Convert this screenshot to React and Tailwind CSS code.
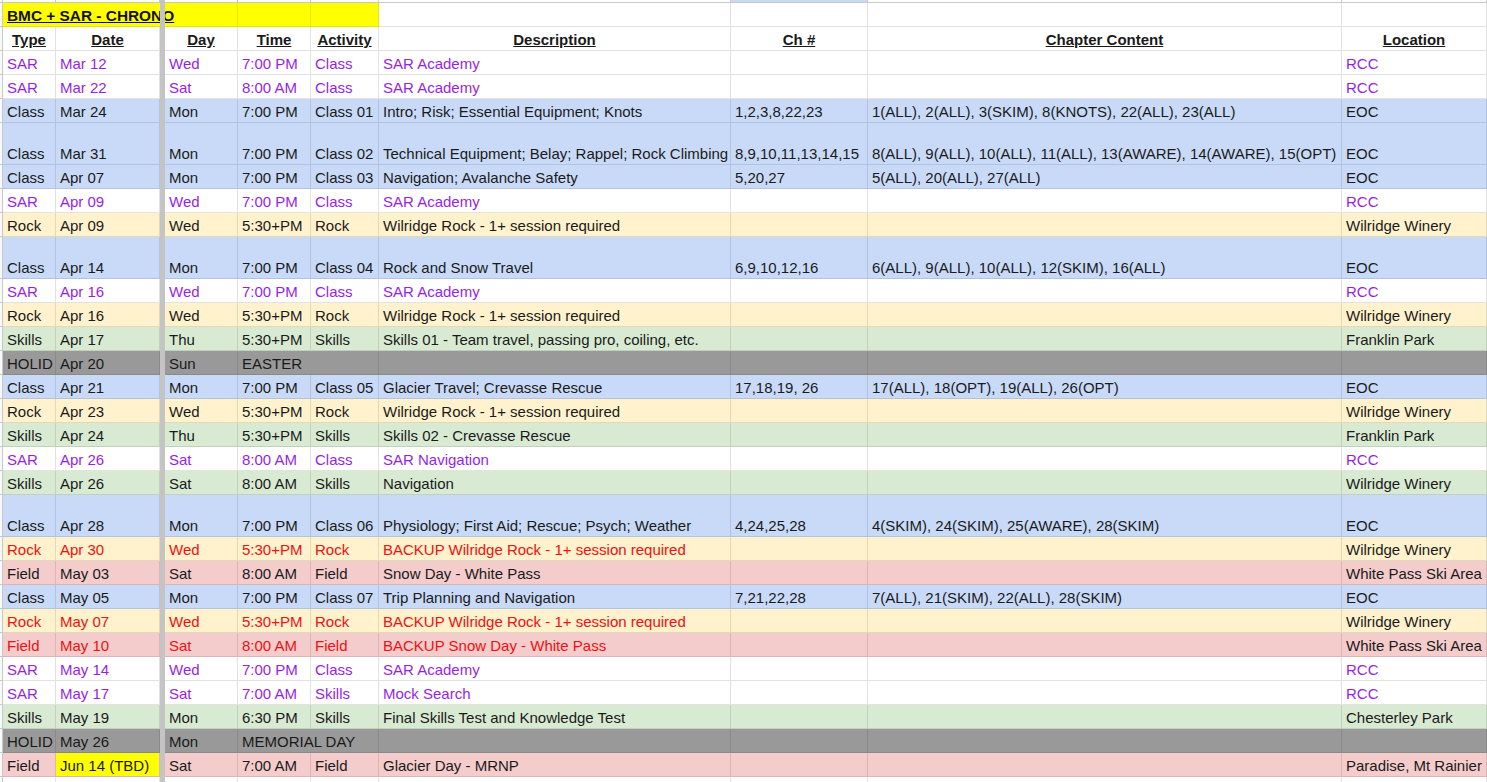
import React from "react";

const rowGrid =
  "grid grid-cols-[3px_53px_104px_5px_73px_73px_68px_352px_137px_474px_145px]";

const rowStyles = {
  sar: { bg: "bg-white", text: "text-[#961fe8]", loc: "text-[#961fe8]", line: "border-[#e2e2e2]" },
  cls: { bg: "bg-[#c9daf8]", text: "text-[#1a1a1a]", loc: "text-[#1a1a1a]", line: "border-[#b4c3dd]" },
  rock: { bg: "bg-[#fff2cc]", text: "text-[#1a1a1a]", loc: "text-[#1a1a1a]", line: "border-[#e2d8ba]" },
  rockLate: { bg: "bg-[#fff2cc]", text: "text-[#f01010]", loc: "text-[#1a1a1a]", line: "border-[#e2d8ba]" },
  skills: { bg: "bg-[#d9ead3]", text: "text-[#1a1a1a]", loc: "text-[#1a1a1a]", line: "border-[#c2d1bd]" },
  field: { bg: "bg-[#f4cccc]", text: "text-[#1a1a1a]", loc: "text-[#1a1a1a]", line: "border-[#dab7b7]" },
  fieldLate: { bg: "bg-[#f4cccc]", text: "text-[#f01010]", loc: "text-[#1a1a1a]", line: "border-[#dab7b7]" },
  holiday: { bg: "bg-[#999999]", text: "text-[#1a1a1a]", loc: "text-[#1a1a1a]", line: "border-[#8a8a8a]" },
};

const academy = "SAR Academy";
const wilridge = "Wilridge Rock - 1+ session required";

const rows = [
  { kind: "sar", type: "SAR", date: "Mar 12", day: "Wed", time: "7:00 PM", act: "Class", desc: academy, loc: "RCC" },
  { kind: "sar", type: "SAR", date: "Mar 22", day: "Sat", time: "8:00 AM", act: "Class", desc: academy, loc: "RCC" },
  { kind: "cls", type: "Class", date: "Mar 24", day: "Mon", time: "7:00 PM", act: "Class 01", desc: "Intro; Risk; Essential Equipment; Knots", ch: "1,2,3,8,22,23", content: "1(ALL), 2(ALL), 3(SKIM), 8(KNOTS), 22(ALL), 23(ALL)", loc: "EOC" },
  { kind: "cls", tall: true, type: "Class", date: "Mar 31", day: "Mon", time: "7:00 PM", act: "Class 02", desc: "Technical Equipment; Belay; Rappel; Rock Climbing", ch: "8,9,10,11,13,14,15", content: "8(ALL), 9(ALL), 10(ALL), 11(ALL), 13(AWARE), 14(AWARE), 15(OPT)", loc: "EOC" },
  { kind: "cls", type: "Class", date: "Apr 07", day: "Mon", time: "7:00 PM", act: "Class 03", desc: "Navigation; Avalanche Safety", ch: "5,20,27", content: "5(ALL), 20(ALL), 27(ALL)", loc: "EOC" },
  { kind: "sar", type: "SAR", date: "Apr 09", day: "Wed", time: "7:00 PM", act: "Class", desc: academy, loc: "RCC" },
  { kind: "rock", type: "Rock", date: "Apr 09", day: "Wed", time: "5:30+PM", act: "Rock", desc: wilridge, loc: "Wilridge Winery" },
  { kind: "cls", tall: true, type: "Class", date: "Apr 14", day: "Mon", time: "7:00 PM", act: "Class 04", desc: "Rock and Snow Travel", ch: "6,9,10,12,16", content: "6(ALL), 9(ALL), 10(ALL), 12(SKIM), 16(ALL)", loc: "EOC" },
  { kind: "sar", type: "SAR", date: "Apr 16", day: "Wed", time: "7:00 PM", act: "Class", desc: academy, loc: "RCC" },
  { kind: "rock", type: "Rock", date: "Apr 16", day: "Wed", time: "5:30+PM", act: "Rock", desc: wilridge, loc: "Wilridge Winery" },
  { kind: "skills", type: "Skills", date: "Apr 17", day: "Thu", time: "5:30+PM", act: "Skills", desc: "Skills 01 - Team travel, passing pro, coiling, etc.", loc: "Franklin Park" },
  { kind: "holiday", type: "HOLID", date: "Apr 20", day: "Sun", time: "EASTER" },
  { kind: "cls", type: "Class", date: "Apr 21", day: "Mon", time: "7:00 PM", act: "Class 05", desc: "Glacier Travel; Crevasse Rescue", ch: "17,18,19, 26", content: "17(ALL), 18(OPT), 19(ALL), 26(OPT)", loc: "EOC" },
  { kind: "rock", type: "Rock", date: "Apr 23", day: "Wed", time: "5:30+PM", act: "Rock", desc: wilridge, loc: "Wilridge Winery" },
  { kind: "skills", type: "Skills", date: "Apr 24", day: "Thu", time: "5:30+PM", act: "Skills", desc: "Skills 02 - Crevasse Rescue", loc: "Franklin Park" },
  { kind: "sar", type: "SAR", date: "Apr 26", day: "Sat", time: "8:00 AM", act: "Class", desc: "SAR Navigation", loc: "RCC" },
  { kind: "skills", type: "Skills", date: "Apr 26", day: "Sat", time: "8:00 AM", act: "Skills", desc: "Navigation", loc: "Wilridge Winery" },
  { kind: "cls", tall: true, type: "Class", date: "Apr 28", day: "Mon", time: "7:00 PM", act: "Class 06", desc: "Physiology; First Aid; Rescue; Psych; Weather", ch: "4,24,25,28", content: "4(SKIM), 24(SKIM), 25(AWARE), 28(SKIM)", loc: "EOC" },
  { kind: "rockLate", type: "Rock", date: "Apr 30", day: "Wed", time: "5:30+PM", act: "Rock", desc: "BACKUP Wilridge Rock - 1+ session required", loc: "Wilridge Winery" },
  { kind: "field", type: "Field", date: "May 03", day: "Sat", time: "8:00 AM", act: "Field", desc: "Snow Day - White Pass", loc: "White Pass Ski Area" },
  { kind: "cls", type: "Class", date: "May 05", day: "Mon", time: "7:00 PM", act: "Class 07", desc: "Trip Planning and Navigation", ch: "7,21,22,28", content: "7(ALL), 21(SKIM), 22(ALL), 28(SKIM)", loc: "EOC" },
  { kind: "rockLate", type: "Rock", date: "May 07", day: "Wed", time: "5:30+PM", act: "Rock", desc: "BACKUP Wilridge Rock - 1+ session required", loc: "Wilridge Winery" },
  { kind: "fieldLate", type: "Field", date: "May 10", day: "Sat", time: "8:00 AM", act: "Field", desc: "BACKUP Snow Day - White Pass", loc: "White Pass Ski Area" },
  { kind: "sar", type: "SAR", date: "May 14", day: "Wed", time: "7:00 PM", act: "Class", desc: academy, loc: "RCC" },
  { kind: "sar", type: "SAR", date: "May 17", day: "Sat", time: "7:00 AM", act: "Skills", desc: "Mock Search", loc: "RCC" },
  { kind: "skills", type: "Skills", date: "May 19", day: "Mon", time: "6:30 PM", act: "Skills", desc: "Final Skills Test and Knowledge Test", loc: "Chesterley Park" },
  { kind: "holiday", type: "HOLID", date: "May 26", day: "Mon", time: "MEMORIAL DAY" },
  { kind: "field", type: "Field", date: "Jun 14 (TBD)", dateMark: true, day: "Sat", time: "7:00 AM", act: "Field", desc: "Glacier Day - MRNP", loc: "Paradise, Mt Rainier" },
];

// one sheet cell, text sits on the bottom edge like in the spreadsheet
const Cell = ({ line, className = "", children }) => (
  <div className={`flex items-end pl-[4px] pb-[1px] border-r border-b whitespace-nowrap overflow-hidden ${line} ${className}`}>
    {children}
  </div>
);

const FreezeBar = () => <div className="bg-[#c4c4c4] relative z-10" />;
const Gutter = () => <div className="bg-[#f8f9fa] border-r border-b border-[#c8c8c8]" />;

const Row = ({ row }) => {
  const s = rowStyles[row.kind];
  const line = s.line;
  return (
    <div className={`${rowGrid} ${row.tall ? "h-[42px]" : "h-[24px]"} ${s.bg} ${s.text}`}>
      <Gutter />
      <Cell line={line}>{row.type}</Cell>
      <Cell line={line} className={row.dateMark ? "bg-[#ffff00]" : ""}>{row.date}</Cell>
      <FreezeBar />
      <Cell line={line}>{row.day}</Cell>
      {row.kind === "holiday" ? (
        <Cell line={line} className="col-span-2">{row.time}</Cell>
      ) : (
        <>
          <Cell line={line}>{row.time}</Cell>
          <Cell line={line}>{row.act}</Cell>
        </>
      )}
      <Cell line={line}>{row.desc}</Cell>
      <Cell line={line}>{row.ch}</Cell>
      <Cell line={line}>{row.content}</Cell>
      <Cell line={line} className={s.loc}>{row.loc}</Cell>
    </div>
  );
};

const Head = ({ children }) => (
  <div className="flex items-end justify-center pb-[1px] border-r border-b border-[#e2e2e2] font-bold underline whitespace-nowrap">
    {children}
  </div>
);

const Blank = ({ className = "border-[#e2e2e2]" }) => <div className={`border-r border-b ${className}`} />;

export default function App() {
  return (
    <div className="w-[1487px] h-[782px] overflow-hidden bg-white text-[15px] leading-[18px] text-[#1a1a1a] font-['Liberation_Sans',Arial,sans-serif]">
      {/* sliver of the row scrolled off the top */}
      <div className={`${rowGrid} h-[3px]`}>
        <Blank className="border-[#c8c8c8]" />
        <Blank className="border-[#c8c8c8]" />
        <Blank className="border-[#c8c8c8]" />
        <FreezeBar />
        <Blank className="border-[#c8c8c8]" />
        <Blank className="border-[#c8c8c8]" />
        <Blank className="border-[#c8c8c8]" />
        <Blank className="border-[#c8c8c8]" />
        <Blank className="border-[#c8c8c8] bg-[#c9daf8]" />
        <Blank className="border-[#c8c8c8]" />
        <Blank className="border-[#c8c8c8]" />
      </div>

      {/* title row, the title runs on under the freeze bar */}
      <div className={`${rowGrid} h-[24px]`}>
        <Gutter />
        <div className="col-span-2 relative z-[5] bg-[#ffff00] flex items-end pl-[4px] pb-[1px] text-[15.4px] text-[#111111] font-bold underline whitespace-nowrap border-b border-[#e6e600]">
          BMC + SAR - CHRONO
        </div>
        <FreezeBar />
        <Blank className="bg-[#ffff00] border-[#e6e600]" />
        <Blank className="bg-[#ffff00] border-[#e6e600]" />
        <Blank className="bg-[#ffff00] border-[#e6e600]" />
        <Blank />
        <Blank />
        <Blank />
        <Blank />
      </div>

      {/* column headers */}
      <div className={`${rowGrid} h-[24px]`}>
        <Gutter />
        <Head>Type</Head>
        <Head>Date</Head>
        <FreezeBar />
        <Head>Day</Head>
        <Head>Time</Head>
        <Head>Activity</Head>
        <Head>Description</Head>
        <Head>Ch #</Head>
        <Head>Chapter Content</Head>
        <Head>Location</Head>
      </div>

      {rows.map((row, i) => (
        <Row key={i} row={row} />
      ))}

      {/* empty row under the schedule */}
      <div className={`${rowGrid} h-[24px]`}>
        <Gutter />
        <Blank />
        <Blank />
        <FreezeBar />
        <Blank />
        <Blank />
        <Blank />
        <Blank />
        <Blank />
        <Blank />
        <Blank />
      </div>
    </div>
  );
}
